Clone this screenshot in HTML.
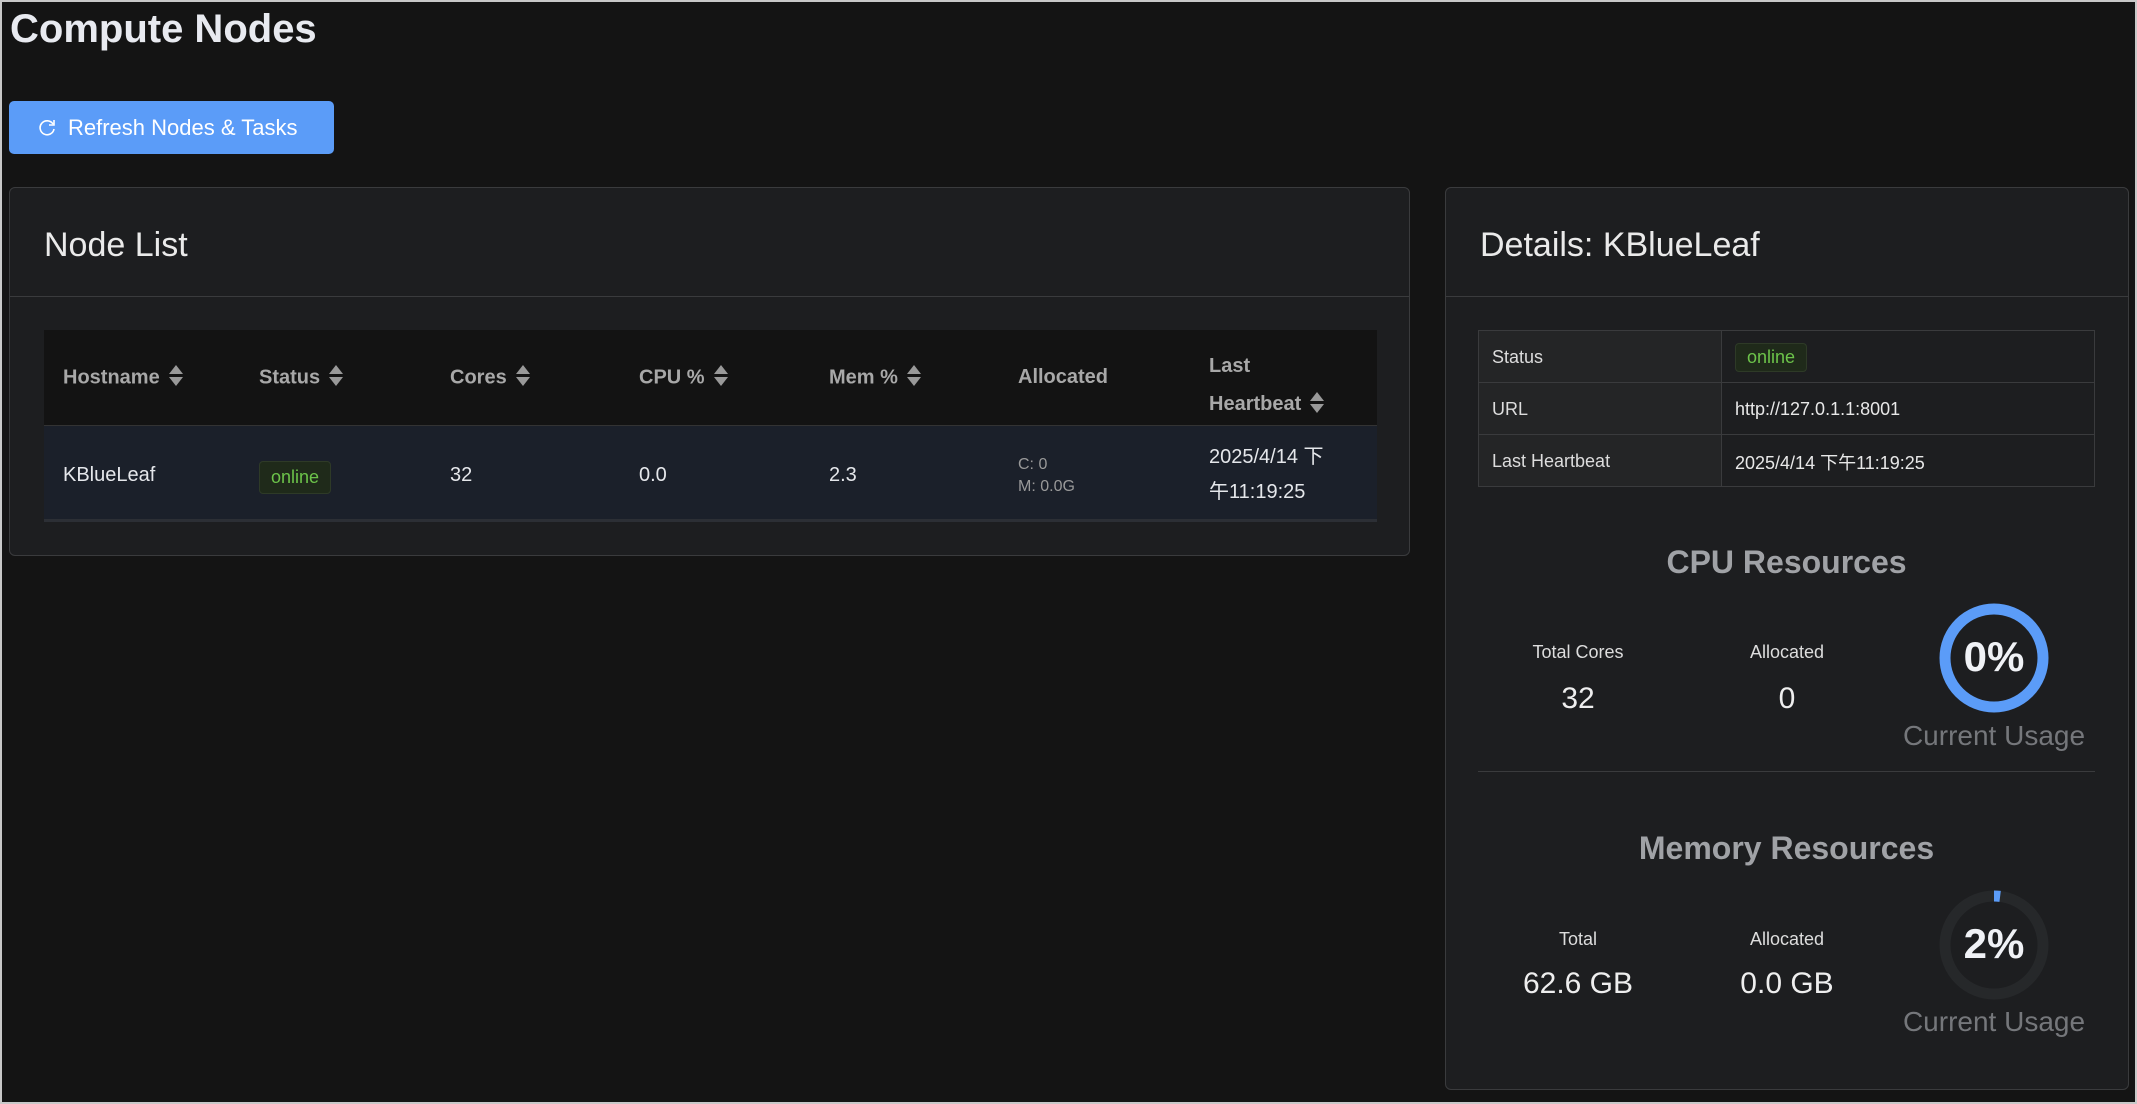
<!DOCTYPE html>
<html><head><meta charset="utf-8"><style>
*{box-sizing:border-box;margin:0;padding:0}
html,body{width:2137px;height:1104px;overflow:hidden;background:#141414;font-family:"Liberation Sans","Noto Sans CJK SC",sans-serif;color:#e5e7eb}
.frame{position:absolute;left:0;top:0;width:2137px;height:1104px;border:2px solid #c8c8c8}
.a{position:absolute}
h1{position:absolute;left:10px;top:7px;font-size:40px;font-weight:bold;color:#e8eaf0}
.btn{position:absolute;left:9px;top:101px;width:325px;height:53px;background:#5b9cf8;border-radius:5px;color:#fff;font-size:22px;line-height:54px;padding-left:59px}
.btn svg{position:absolute;left:28px;top:17px}
.card{position:absolute;background:#1d1e20;border:1px solid #3a3b3d;border-radius:6px}
.ch{position:absolute;left:0;right:0;top:0;height:109px;border-bottom:1px solid #3a3b3d}
.ch span{position:absolute;left:34px;top:38px;font-size:34px;color:#eaeaea}
.th{position:absolute;top:330px;height:95px;background:#131313;left:44px;width:1333px}
.tr{position:absolute;top:425px;height:97px;background:#1b202a;left:44px;width:1333px;border-top:1px solid #333;border-bottom:3px solid #2c2f35}
.hc{position:absolute;font-size:20px;font-weight:bold;color:#a8a8a8;top:36px}
.bc{position:absolute;font-size:20px;color:#e5e7eb;top:38px}
.sort{display:inline-block;vertical-align:middle;margin-left:9px;width:14px;height:24px;position:relative;top:-2px}
.sort:before{content:"";position:absolute;left:0;top:1px;border:7px solid transparent;border-bottom:9px solid #999;border-top:0}
.sort:after{content:"";position:absolute;left:0;top:13px;border:7px solid transparent;border-top:9px solid #999;border-bottom:0}
.badge{display:inline-block;background:#1f2a1a;border:1px solid #2e3a27;color:#6cc34a;border-radius:4px;font-size:18px;padding:5px 11px}
table.d{position:absolute;left:1478px;top:330px;width:617px;border-collapse:collapse;font-size:18px}
table.d td{border:1px solid #3a3b3d;height:52px;padding:2px 13px 0;color:#e8e8e8}
table.d td:first-child{background:#242526;width:243px;color:#ddd}
.sec{position:absolute;left:1478px;width:617px;text-align:center;font-size:32px;font-weight:bold;color:#a0a2a6}
.lbl{position:absolute;font-size:18px;color:#ddd;text-align:center;width:200px}
.val{position:absolute;font-size:30px;color:#eee;text-align:center;width:200px}
.cu{position:absolute;font-size:28px;color:#75777b;text-align:center;width:220px;left:1884px}
.pct{position:absolute;width:150px;text-align:center;left:1919px;font-size:42px;font-weight:bold;color:#f0f2f6}
</style></head><body>
<div class="frame"></div>
<h1>Compute Nodes</h1>
<div class="btn"><svg width="20" height="20" viewBox="0 0 20 20"><path d="M16 6A7 7 0 1 0 17 11" fill="none" stroke="#fff" stroke-width="1.6"/><path d="M17 2v5h-5" fill="none" stroke="#fff" stroke-width="1.6"/></svg>Refresh Nodes &amp; Tasks</div>

<div class="card" style="left:9px;top:187px;width:1401px;height:369px">
<div class="ch"><span>Node List</span></div></div>
<div class="th">
<div class="hc" style="left:19px">Hostname<span class="sort"></span></div>
<div class="hc" style="left:215px">Status<span class="sort"></span></div>
<div class="hc" style="left:406px">Cores<span class="sort"></span></div>
<div class="hc" style="left:595px">CPU %<span class="sort"></span></div>
<div class="hc" style="left:785px">Mem %<span class="sort"></span></div>
<div class="hc" style="left:974px">Allocated</div>
<div class="hc" style="left:1165px;top:17px;line-height:38px">Last<br>Heartbeat<span class="sort"></span></div>
</div>
<div class="tr">
<div class="bc" style="left:19px">KBlueLeaf</div>
<div class="bc" style="left:215px;top:35px"><span class="badge">online</span></div>
<div class="bc" style="left:406px">32</div>
<div class="bc" style="left:595px">0.0</div>
<div class="bc" style="left:785px">2.3</div>
<div class="bc" style="left:974px;top:28px;font-size:16px;color:#999;line-height:22px">C: 0<br>M: 0.0G</div>
<div class="bc" style="left:1165px;top:14px;line-height:35px">2025/4/14 下<br>午11:19:25</div>
</div>

<div class="card" style="left:1445px;top:187px;width:684px;height:903px">
<div class="ch"><span>Details: KBlueLeaf</span></div></div>
<table class="d">
<tr><td>Status</td><td><span class="badge" style="font-size:18px;padding:3px 11px">online</span></td></tr>
<tr><td>URL</td><td>http://127.0.1.1:8001</td></tr>
<tr><td>Last Heartbeat</td><td>2025/4/14 下午11:19:25</td></tr>
</table>

<div class="sec" style="top:544px">CPU Resources</div>
<div class="lbl" style="left:1478px;top:642px">Total Cores</div>
<div class="val" style="left:1478px;top:682px">32</div>
<div class="lbl" style="left:1687px;top:642px">Allocated</div>
<div class="val" style="left:1687px;top:682px">0</div>
<svg class="a" style="left:1938px;top:602px" width="112" height="112"><circle cx="56" cy="56" r="49" fill="none" stroke="#5b9cf8" stroke-width="11"/></svg>
<div class="pct" style="top:633px">0%</div>
<div class="cu" style="top:720px">Current Usage</div>
<div class="a" style="left:1478px;top:771px;width:617px;height:1px;background:#3a3b3d"></div>

<div class="sec" style="top:830px">Memory Resources</div>
<div class="lbl" style="left:1478px;top:929px">Total</div>
<div class="val" style="left:1478px;top:967px">62.6 GB</div>
<div class="lbl" style="left:1687px;top:929px">Allocated</div>
<div class="val" style="left:1687px;top:967px">0.0 GB</div>
<svg class="a" style="left:1938px;top:889px" width="112" height="112"><circle cx="56" cy="56" r="49" fill="none" stroke="#26282a" stroke-width="11"/><circle cx="56" cy="56" r="49" fill="none" stroke="#5b9cf8" stroke-width="11" stroke-dasharray="6.2 400" transform="rotate(-90 56 56)"/></svg>
<div class="pct" style="top:920px">2%</div>
<div class="cu" style="top:1006px">Current Usage</div>
</body></html>
